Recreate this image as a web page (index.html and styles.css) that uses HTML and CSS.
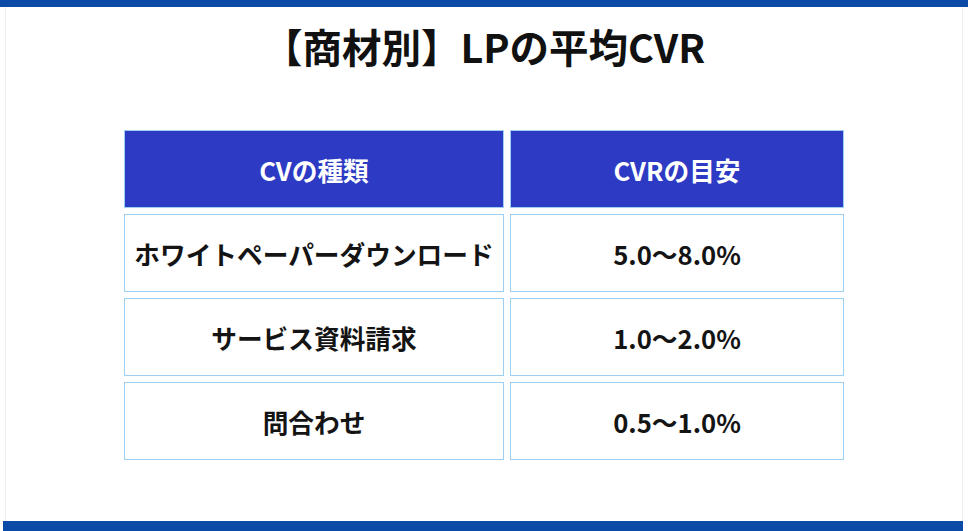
FILE: index.html
```html
<!DOCTYPE html>
<html lang="ja">
<head>
<meta charset="utf-8">
<title>【商材別】LPの平均CVR</title>
<link rel="stylesheet" href="styles.css">
</head>
<body>
<div class="slide">
  <div class="top-bar"></div>
  <div class="content">
    <h1 class="title">【商材別】LPの平均CVR</h1>
    <div class="table">
      <div class="cell head">CVの種類</div>
      <div class="cell head">CVRの目安</div>
      <div class="cell">ホワイトペーパーダウンロード</div>
      <div class="cell">5.0〜8.0%</div>
      <div class="cell">サービス資料請求</div>
      <div class="cell">1.0〜2.0%</div>
      <div class="cell">問合わせ</div>
      <div class="cell">0.5〜1.0%</div>
    </div>
  </div>
  <div class="bottom-bar"></div>
</div>
</body>
</html>
```

FILE: styles.css
```css
html, body {
  margin: 0;
  padding: 0;
  background: #ffffff;
}
body {
  width: 968px;
  height: 531px;
  overflow: hidden;
  font-family: "Noto Sans CJK JP", "Noto Sans", sans-serif;
}
.slide {
  width: 968px;
  height: 531px;
  display: flex;
  flex-direction: column;
  box-sizing: border-box;
}
.top-bar {
  height: 7px;
  background: #0b4aa6;
  flex: none;
}
.content {
  flex: 1;
  margin: 0 5px 0 5px;
  border-left: 1px solid #eeeeee;
  border-right: 1px solid #eeeeee;
  display: flex;
  flex-direction: column;
  align-items: center;
}
.title {
  margin: 13px 0 0 0;
  font-size: 39.5px;
  line-height: 52px;
  font-weight: 700;
  color: #111111;
  letter-spacing: 0;
}
.table {
  margin-top: 58px;
  margin-left: 0;
  display: grid;
  grid-template-columns: 380px 334px;
  grid-auto-rows: 78px;
  gap: 6px;
}
.cell {
  border: 1.5px solid #9ccff1;
  display: flex;
  align-items: center;
  justify-content: center;
  font-size: 25.7px;
  font-weight: 700;
  color: #141414;
  letter-spacing: 0;
  background: #ffffff;
}
.cell.head {
  background: #2c3ac4;
  color: #ffffff;
}
.bottom-bar {
  height: 10px;
  background: #0b4aa6;
  margin: 0 5px 0 3px;
  flex: none;
}
```
